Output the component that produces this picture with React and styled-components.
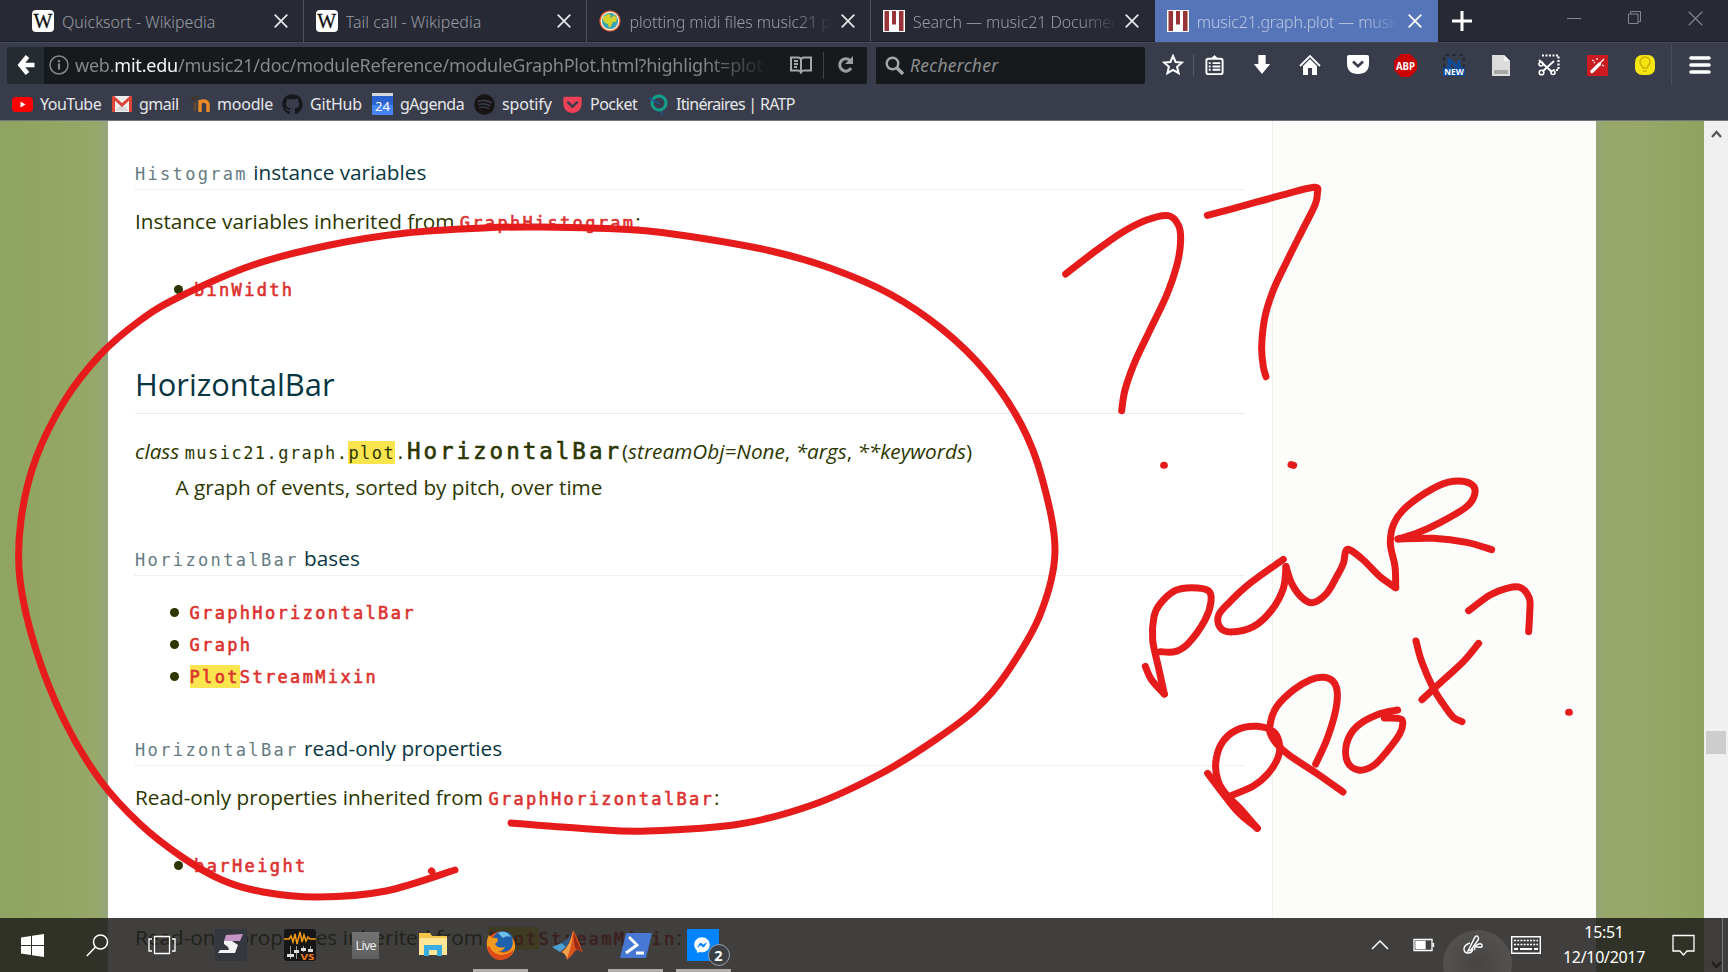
import React from "react";
import styled, { createGlobalStyle, css } from "styled-components";
import { FaGithub, FaSpotify, FaGetPocket, FaFacebookMessenger } from "react-icons/fa";

const Global = createGlobalStyle`
  * { box-sizing: border-box; }
  body { margin: 0; background: #fff; overflow: hidden; }
  svg { display: block; flex: none; }
`;

const ui = `"Noto Sans", "Open Sans", sans-serif`;
const bodyFont = `"Open Sans", "Noto Sans", sans-serif`;
const mono = `"DejaVu Sans Mono", "Liberation Mono", monospace`;

const Screen = styled.div`
  position: relative;
  width: 1728px;
  height: 972px;
  overflow: hidden;
  display: flex;
  flex-direction: column;
`;

/* ---------- browser chrome ---------- */
const TabStrip = styled.div`
  display: flex;
  height: 42px;
  padding-left: 20px;
  background: #272a35;
  border-bottom: 1px solid #1d2029;
`;
const Tab = styled.div`
  display: flex;
  align-items: center;
  width: 283.7px;
  height: 42px;
  padding: 0 15px 0 12px;
  border-right: 1px solid ${(p) => (p.$active ? "#5675b9" : p.$last ? "transparent" : "#4d505b")};
  background: ${(p) => (p.$active ? "#5675b9" : "transparent")};
`;
const TabTitle = styled.div`
  flex: 1;
  margin: 2px 8px 0 8px;
  overflow: hidden;
  white-space: nowrap;
  font: 300 16px ${ui};
  letter-spacing: ${(p) => p.$ls || 0}px;
  color: ${(p) => (p.$active ? "#bcc7e1" : "#9a9ca4")};
  ${(p) => p.$fade && css`mask-image: linear-gradient(90deg, #000 82%, transparent 100%);`}
`;
const WinControls = styled.div`
  display: flex;
  align-items: center;
  gap: 45px;
  margin-left: 92px;
  height: 36px;
`;
const NewTab = styled.div`
  display: flex;
  align-items: center;
  height: 41px;
  margin-left: 14px;
`;
const NavBar = styled.div`
  display: flex;
  align-items: center;
  height: 46px;
  padding: 0 0 1px 7px;
  background: #393d4b;
  border-top: 1px solid #454957;
`;
const Back = styled.div`
  display: flex;
  align-items: center;
  justify-content: center;
  width: 37px;
  height: 37px;
  background: #242b31;
  border-radius: 2px 0 0 2px;
`;
const Field = styled.div`
  display: flex;
  align-items: center;
  width: ${(p) => p.$w}px;
  height: 37px;
  padding-left: ${(p) => p.$pl}px;
  margin-right: 9px;
  background: #171a1d;
  border-radius: 0 2px 2px 0;
`;
const Url = styled.div`
  width: 689px;
  margin: 0 26px 0 6px;
  overflow: hidden;
  white-space: nowrap;
  font: 18px ${ui};
  letter-spacing: ${(p) => p.$ls}px;
  color: #85878a;
  mask-image: linear-gradient(90deg, #000 91%, transparent 101%);
  b { font-weight: 400; color: #f4f4f4; }
`;
const Hint = styled.div`
  margin-left: 6px;
  font: italic 17.5px ${ui};
  letter-spacing: 0.25px;
  color: #8b8d8f;
`;
const VLine = styled.div`
  width: 1px;
  height: ${(p) => p.$h}px;
  margin: 0 ${(p) => p.$r}px 0 ${(p) => p.$l}px;
  background: ${(p) => p.$c || "#565a66"};
`;
const Tools = styled.div`
  display: flex;
  align-items: center;
`;
const Tool = styled.div`
  display: flex;
  justify-content: center;
  width: ${(p) => p.$w || 47.8}px;
  margin-right: ${(p) => p.$mr || 0}px;
`;
const Bookmarks = styled.div`
  display: flex;
  align-items: center;
  height: 33px;
  padding-left: 12px;
  background: #393d4b;
  border-bottom: 1px solid #71727c;
`;
const Bookmark = styled.div`
  display: flex;
  align-items: center;
  gap: 7px;
  width: ${(p) => p.$w}px;
  height: 32px;
  white-space: nowrap;
  font: 16px ${ui};
  letter-spacing: ${(p) => p.$ls || 0}px;
  color: #e6e7ea;
`;

/* ---------- page ---------- */
const Viewport = styled.div`
  display: flex;
  height: 851px;
  overflow: hidden;
`;
const Grass = styled.div`
  width: 108px;
  background: ${(p) =>
    p.$right
      ? "linear-gradient(90deg, #93a57b 0, #97a868 9px, #96a767 50%, #8fa35f 100%)"
      : "linear-gradient(90deg, #8fa462 0, #92a562 40%, #97a868 88%, #93a57b 100%)"};
`;
const Main = styled.main`
  width: 1164px;
  padding: 0 27px;
  background: #fff;
  font: 20.75px/32px ${bodyFont};
  color: #2c3600;
  white-space: nowrap;
`;
const Side = styled.aside`
  width: 324px;
  background: #fcfdfa;
  border-left: 1px dotted #e6e8d6;
`;
const ScrollBar = styled.div`
  display: flex;
  flex-direction: column;
  align-items: center;
  width: 24px;
  padding-top: 9px;
  background: #f0f0f0;
`;
const Thumb = styled.div`
  width: 20px;
  height: 23px;
  margin: 593px 0 207px 0;
  background: #cdcdcd;
`;
const H2 = styled.h2`
  margin: 58px 0 0;
  padding-bottom: 7px;
  border-bottom: 1px solid #e8ebea;
  font: 30.9px/44px ${bodyFont};
  color: #073642;
`;
const H3 = styled.h3`
  margin: ${(p) => p.$mt}px 0 0;
  padding-bottom: 1px;
  border-bottom: 1px dotted #dfe3e1;
  font: 20.75px/32px ${bodyFont};
  color: #073642;
`;
const P = styled.p`
  margin: ${(p) => p.$mt}px 0 0;
  padding-left: ${(p) => p.$pl || 0}px;
  height: 32px;
`;
const Code = styled.code`
  font: 400 ${(p) => p.$size || 17}px/0 ${mono};
  letter-spacing: ${(p) => p.$ls ?? 2.3}px;
  color: ${(p) => p.$c || "inherit"};
  ${(p) => p.$bold && css`-webkit-text-stroke: 0.6px currentColor;`}
`;
const Link = styled(Code).attrs({ $bold: true, $c: "#dc322f" })``;
const Mark = styled.mark`
  padding: 2px 0 1px;
  background: #fbe54e;
  color: inherit;
`;
const List = styled.ul`
  margin: ${(p) => p.$mt}px 0 0;
  padding: 0 0 0 ${(p) => p.$pl}px;
  list-style: none;
`;
const Item = styled.li`
  height: 32px;
  &::before {
    content: "";
    display: inline-block;
    width: 9px;
    height: 9px;
    margin-right: 11px;
    vertical-align: 2.5px;
    border-radius: 50%;
    background: #2c3600;
  }
`;

/* ---------- task bar ---------- */
const TaskBar = styled.div`
  position: absolute;
  left: 0;
  right: 0;
  bottom: 0;
  z-index: 3;
  display: flex;
  height: 54px;
  background: rgba(30, 29, 28, 0.85);
  overflow: hidden;
`;
const Task = styled.div`
  position: relative;
  display: flex;
  align-items: center;
  justify-content: center;
  width: ${(p) => p.$w || 67.5}px;
  height: 54px;
  ${(p) =>
    p.$open &&
    css`
      &::after {
        content: "";
        position: absolute;
        bottom: 0;
        left: 6px;
        width: 55px;
        height: 3px;
        background: #b2acaa;
      }
    `}
`;
const LiveTile = styled.div`
  width: 27px;
  height: 27px;
  background: linear-gradient(#747474, #5e5e5e);
  color: #f2f2f2;
  font: 12.5px/28px "Open Sans", sans-serif;
  letter-spacing: -0.6px;
  text-align: center;
`;
const Badge = styled.div`
  position: absolute;
  left: 38px;
  top: 26px;
  width: 22px;
  height: 22px;
  border: 1px solid #9aa1a8;
  border-radius: 50%;
  background: #3a4046;
  color: #fff;
  font: 700 14.5px/20px ${ui};
  text-align: center;
`;
const Tray = styled.div`
  display: flex;
  align-items: center;
  margin-left: auto;
`;
const PenHalo = styled.div`
  display: flex;
  justify-content: center;
  width: 69px;
  height: 69px;
  margin-top: 39px;
  padding-top: 5px;
  border-radius: 50%;
  background: radial-gradient(circle, #464543 0, #555452 85%);
  svg { margin-left: -10px; }
`;
const Clock = styled.div`
  width: 100px;
  text-align: center;
  font: 16px/25px ${ui};
  letter-spacing: -0.3px;
  color: #fff;
`;

/* ---------- ink ---------- */
const InkLayer = styled.svg`
  position: absolute;
  inset: 0;
  z-index: 2;
  fill: none;
  stroke: #e61c1c;
  stroke-width: 7;
  stroke-linecap: round;
  stroke-linejoin: round;
`;

/* Smooth curve (Catmull-Rom) through a flat list of x,y values. */
function curve(flat, [ox, oy, k]) {
  const pts = [];
  for (let i = 0; i < flat.length; i += 2) pts.push([ox + flat[i] / k, oy + flat[i + 1] / k]);
  let d = `M${pts[0]}`;
  for (let i = 0; i < pts.length - 1; i++) {
    const a = pts[i - 1] || pts[i], b = pts[i], c = pts[i + 1], e = pts[i + 2] || c;
    d += `C${b[0] + (c[0] - a[0]) / 6},${b[1] + (c[1] - a[1]) / 6} ${c[0] - (e[0] - b[0]) / 6},${c[1] - (e[1] - b[1]) / 6} ${c}`;
  }
  return d;
}

const ink = [
  { at: [0, 0, 1], strokes: [
    [511,823, 590,829, 647,831, 740,824, 815,804, 882,773, 935,740, 976,709, 1006,674, 1040,615, 1055,551, 1042,478, 1021,424, 986,372, 942,329, 890,294, 830,268, 771,251, 700,238, 636,230, 540,227, 483,228, 406,233, 330,245, 253,265, 177,298, 138,322, 100,355, 65,400, 36,458, 21,520, 20,580, 36,650, 64,720, 100,780, 140,824, 182,857, 222,880, 263,892, 318,897, 386,891, 455,870],
    [431.5,871, 432,871.5],
  ] },
  { at: [1040, 160, 3], strokes: [
    [77,342, 160,278, 245,218, 320,180, 385,167, 415,195, 422,240, 412,310, 380,405, 330,510, 285,605, 255,690, 245,752],
    [502,166, 600,140, 720,107, 822,82, 832,100, 825,135, 790,205, 740,305, 700,390, 675,470, 665,560, 670,620, 678,650],
    [371,916, 373,916],
    [753,914, 761,916],
  ] },
  { at: [1120, 460, 3], strokes: [
    [76,619, 95,660, 133,702],
    [133,702, 115,620, 98,540, 102,470, 120,432, 165,392, 215,383, 265,392, 273,425, 255,480, 205,550, 165,575, 121,575],
    [490,298, 390,370, 330,425, 296,465, 300,502, 332,516, 400,500, 455,450, 490,385, 498,320],
    [498,320, 515,370, 545,412, 578,428, 620,400, 650,350, 670,310, 677,274, 690,270, 730,300, 780,350, 827,383],
    [827,383, 825,320, 811,250, 822,190, 860,140, 940,85, 1000,64, 1050,70, 1065,98, 1040,140, 960,188, 890,220, 834,237],
    [834,237, 940,235, 1040,247, 1115,269],
    [1046,452, 1110,405, 1160,385, 1200,382, 1228,415, 1229,460, 1226,515],
    [1346,757, 1348,757],
    [888,543, 905,605, 940,685, 975,740, 1000,772, 1026,785],
    [1076,550, 1030,605, 970,660, 906,719],
    [263,940, 320,1015, 360,1062, 412,1105],
    [412,1105, 360,1045, 320,1005, 295,965, 287,910, 305,850, 350,810, 410,799, 460,815, 478,850, 475,890, 445,940, 400,978, 325,1010],
    [669,996, 590,940, 500,880, 455,830, 451,790, 470,740, 520,690, 570,660, 610,652, 640,665, 652,700, 645,760, 620,840, 587,912],
    [833,750, 770,765, 710,800, 680,850, 682,905, 715,930, 760,917, 800,875, 840,820, 848,785, 835,775, 793,774],
  ] },
];

/* ---------- icons ---------- */
const WikiTile = styled.div`
  display: flex;
  justify-content: center;
  width: 22px;
  height: 22px;
  border-radius: 4px;
  background: #fff;
  color: #111;
  font: 20px/22px "Liberation Serif", serif;
  -webkit-text-stroke: 0.3px #111;
`;
const Cross = ({ s = 14, c = "#e8e8ea", w = 1.7 }) => (
  <svg width={s} height={s} viewBox="0 0 14 14" stroke={c} strokeWidth={w}><path d="M.7.7l12.6 12.6M13.3.7L.7 13.3" /></svg>
);
const GlobeIcon = () => (
  <svg width="22" height="22" viewBox="0 0 22 22">
    <circle cx="11" cy="11" r="10.6" fill="#e2592f" /><circle cx="11" cy="11" r="9.4" fill="#fbe9cf" />
    <circle cx="11" cy="11" r="8" fill="#36a3b5" />
    <path d="M4 7l5-3 3 1-1 3 2-1 2-2 3 3-1 4-3 0-2 4-2 2-1-4-3-1-2-3z" fill="#d5d32b" />
  </svg>
);
const PianoIcon = () => (
  <svg width="22" height="22" viewBox="0 0 22 22">
    <path fill="#fff" d="M0 0h22v22H0z" />
    <path fill="#983338" d="M1.500 1h4.500v20H1.500zM9 1h4v13.500H9zM16 1h4.500v20H16z" />
  </svg>
);
const ToolIcon = ({ size = 22, children }) => (
  <svg width={size} height={size} viewBox="0 0 22 22" fill="none" stroke="#fff" strokeWidth="2">{children}</svg>
);
const GmailIcon = () => (
  <svg width="20" height="16" viewBox="0 0 20 16">
    <path fill="#eee" d="M0 0h20v16H0z" /><path fill="#d8d8d8" d="M3 15l7-7 7 7z" />
    <path fill="none" stroke="#dd4438" strokeWidth="3" d="M1.500 16V1.500L10 9l8.500-7.500V16" />
  </svg>
);
const CalendarIcon = styled.div`
  width: 21px;
  height: 22px;
  border-top: 3px solid #d4d7dc;
  background: linear-gradient(#2a62cf 50%, #4585f3 50%);
  color: #fff;
  font: 13px/20px ${ui};
  letter-spacing: 0;
  text-align: center;
`;

export default function App() {
  return (
    <>
      <Global />
      <Screen>
        <TabStrip>
          <Tab><WikiTile>W</WikiTile><TabTitle>Quicksort - Wikipedia</TabTitle><Cross /></Tab>
          <Tab><WikiTile>W</WikiTile><TabTitle $ls={0.05}>Tail call - Wikipedia</TabTitle><Cross /></Tab>
          <Tab><GlobeIcon /><TabTitle $fade $ls={-0.08}>plotting midi files music21 python</TabTitle><Cross /></Tab>
          <Tab $last><PianoIcon /><TabTitle $fade $ls={-0.08}>Search — music21 Documentation</TabTitle><Cross /></Tab>
          <Tab $active><PianoIcon /><TabTitle $active $fade $ls={-0.15}>music21.graph.plot — music21</TabTitle><Cross c="#fff" /></Tab>
          <NewTab><svg width="20" height="20" stroke="#fff" strokeWidth="3"><path d="M10 0v20M0 10h20" /></svg></NewTab>
          <WinControls>
            <svg width="18" height="16" stroke="#85878f"><path d="M3 8.500h14" /></svg>
            <svg width="16" height="16" fill="none" stroke="#85878f"><path d="M3.500 3.500V1.500h10v10h-2M1.500 4h9.500v9.500H1.500z" /></svg>
            <Cross s={15} c="#85878f" w={1} />
          </WinControls>
        </TabStrip>

        <NavBar>
          <Back><svg width="18" height="20" viewBox="0 0 18 20" fill="none" stroke="#fff" strokeWidth="4.600"><path d="M10.500 1.500L3.500 10l7 8.500M4 10h13.500" /></svg></Back>
          <Field $w={823} $pl={5}>
            <svg width="20" height="20" fill="none" stroke="#85878a" strokeWidth="1.500"><circle cx="10" cy="10" r="9" /><path strokeWidth="2.200" d="M10 8.500v6M10 5v2.200" /></svg>
            <Url $ls={-0.22}>web.<b>mit.edu</b>/music21/doc/moduleReference/moduleGraphPlot.html?highlight=plot</Url>
            <svg width="22" height="18" fill="none" stroke="#a5a6a7" strokeWidth="2"><path d="M1 1.500h7q3 0 3 2.500 0-2.500 3-2.500h7v13h-7q-2 0-3 2-1-2-3-2H1zM11 4v11M4 5h4M4 8h4M4 11h3" /></svg>
            <VLine $h={27} $l={11} $r={13} $c="#3f4347" />
            <svg width="17" height="18" fill="none" stroke="#9c9d9e" strokeWidth="3"><path d="M13 4.500A6 6.200 0 1 0 14 12" /><path fill="#9c9d9e" stroke="none" d="M16 0v8H8z" /></svg>
          </Field>
          <Field $w={269} $pl={9}>
            <svg width="19" height="19" fill="none" stroke="#a5a6a7"><circle cx="7.500" cy="7.500" r="5.800" strokeWidth="2.400" /><path strokeWidth="3.400" d="M12 12l6 6" /></svg>
            <Hint>Rechercher</Hint>
          </Field>
          <Tools>
            <Tool $w={38}><ToolIcon><path d="M11 2l2.600 6 6.300.6-4.800 4.200 1.500 6.400-5.600-3.400-5.600 3.400 1.500-6.400L2.100 8.600 8.400 8z" /></ToolIcon></Tool>
            <VLine $h={22} $l={1} $r={0} />
            <Tool $w={40} $mr={4.6}><ToolIcon size={21}><rect x="2.500" y="4" width="17" height="16" rx="2" /><path fill="#fff" stroke="none" d="M7 4l4-4 4 4z" /><path d="M5 8.500h2M9 8.500h8M5 12h2M9 12h8M5 15.500h2M9 15.500h8" /></ToolIcon></Tool>
            <Tool><ToolIcon size={20}><path fill="#fff" stroke="none" d="M7 0h8v10h5l-9 11-9-11h5z" /></ToolIcon></Tool>
            <Tool><ToolIcon><path strokeWidth="1.800" d="M1 12L11 2l10 10" /><path fill="#fff" stroke="none" d="M4 12l7-7 7 7v9h-5v-7H9v7H4z" /></ToolIcon></Tool>
            <Tool><ToolIcon><path fill="#fff" stroke="none" d="M2 1h18q2 0 2 2v6q0 11-11 11T0 9V3q0-2 2-2z" /><path stroke="#393d4b" strokeWidth="2.600" d="M6 7.500l5 4.800 5-4.800" /></ToolIcon></Tool>
            <Tool>
              <svg width="23" height="23" viewBox="0 0 23 23"><path fill="#cb0000" d="M7 0h9l7 7v9l-7 7H7l-7-7V7z" /><text x="11.500" y="15.500" textAnchor="middle" fill="#fff" fontFamily="Open Sans, sans-serif" fontWeight="700" fontSize="10.500" textLength="19" lengthAdjust="spacingAndGlyphs">ABP</text></svg>
            </Tool>
            <Tool>
              <svg width="22" height="22" viewBox="0 0 22 22"><path fill="none" stroke="#22252e" strokeWidth="1.500" strokeDasharray="4 3" d="M1 14V1h20v13" /><path fill="none" stroke="#0d4b9b" strokeWidth="3" d="M6 14V6l10 8V6" /><path fill="#0d4b9b" d="M0 13.500h22V22H0z" /><text x="11" y="21" textAnchor="middle" fill="#fff" fontFamily="Open Sans, sans-serif" fontWeight="700" fontSize="8.500" textLength="19.500" lengthAdjust="spacingAndGlyphs">NEW</text></svg>
            </Tool>
            <Tool>
              <svg width="18" height="21" viewBox="0 0 18 21"><path fill="#dcdcdc" d="M0 0h12l6 6v15H0z" /><path fill="#f8f8f8" d="M12 0v6h6z" /><path fill="#a6a8a8" d="M2 15h14v4H2z" /></svg>
            </Tool>
            <Tool>
              <ToolIcon><path strokeWidth="2.200" strokeDasharray="2 1.500" d="M4 1.500h16.500v14.500H15" /><path strokeWidth="1.800" d="M1 6l13 12M16 7L5 17" /><circle cx="3.500" cy="18.500" r="2.300" strokeWidth="1.600" /><circle cx="15" cy="18.500" r="2" strokeWidth="1.600" /><circle cx="3" cy="10" r="2" strokeWidth="1.600" /></ToolIcon>
            </Tool>
            <Tool>
              <svg width="21" height="21" viewBox="0 0 21 21"><path fill="#cb1a20" d="M0 0h21v21H0z" /><path stroke="#fff" strokeWidth="3.200" strokeLinecap="round" d="M5 16.500l7.500-7.500" /><path stroke="#fff" strokeWidth="1.200" d="M13 8l4-4M5 5l2 1M10 3v2M15 10l2 1M7 8l1-1" /></svg>
            </Tool>
            <Tool>
              <svg width="20" height="20" viewBox="0 0 20 20"><rect width="20" height="20" rx="7" fill="#f3e612" /><path fill="none" stroke="#d3b100" strokeWidth="1.600" d="M8 13c0-2-3-3-3-6a5 5 0 0 1 10 0c0 3-3 4-3 6zM8 16h4" /></svg>
            </Tool>
            <VLine $h={40} $l={2} $r={17} $c="#4a4e5b" />
            <svg width="22" height="20" stroke="#fff" strokeWidth="3.600" strokeLinecap="round"><path d="M2 3h18M2 10h18M2 17h18" /></svg>
          </Tools>
        </NavBar>

        <Bookmarks>
          <Bookmark $w={100} $ls={-0.5}><svg width="21" height="15" viewBox="0 0 21 15"><rect width="21" height="15" rx="4" fill="#f00" /><path fill="#fff" d="M8.500 4.500l5 3-5 3z" /></svg>YouTube</Bookmark>
          <Bookmark $w={78} $ls={-0.5}><GmailIcon />gmail</Bookmark>
          <Bookmark $w={92} $ls={-0.2}>
            <svg width="20" height="16" viewBox="1 0 20 16"><path fill="#41352f" d="M0 2l8-2 3 2-8 3z" /><path fill="none" stroke="#6b4a2c" strokeWidth="2.500" d="M6 15V6" /><path fill="none" stroke="#ee8a26" strokeWidth="3.400" d="M11 4v12M11 8q0-3 3.500-3T19 8v8" /></svg>moodle
          </Bookmark>
          <Bookmark $w={90} $ls={-0.2}><FaGithub size={21} color="#15171b" />GitHub</Bookmark>
          <Bookmark $w={102} $ls={-0.5}><CalendarIcon>24</CalendarIcon>gAgenda</Bookmark>
          <Bookmark $w={88} $ls={-0.15}><FaSpotify size={21} color="#191414" />spotify</Bookmark>
          <Bookmark $w={87} $ls={-0.5}><FaGetPocket size={21} color="#ee4056" />Pocket</Bookmark>
          <Bookmark $w={160} $ls={-0.7}>
            <svg width="20" height="22" viewBox="0 0 20 22" fill="none"><path stroke="#21578c" strokeWidth="2" d="M0 5l6 2M12 16l1 6" /><circle cx="10" cy="10" r="7" stroke="#13a08b" strokeWidth="3" /><path stroke="#21578c" strokeWidth="2" d="M2 6l9 5" /></svg>Itinéraires | RATP
          </Bookmark>
        </Bookmarks>

        <Viewport>
          <Grass />
          <Main>
            <H3 $mt={35}><Code $c="#657b83">Histogram</Code> instance variables</H3>
            <P $mt={15}>Instance variables inherited from <Link>GraphHistogram</Link>:</P>
            <List $mt={35} $pl={39}><Item><Link>binWidth</Link></Item></List>
            <H2>HorizontalBar</H2>
            <P $mt={21}>
              <i>class </i><Code $ls={1.46}>music21.graph.<Mark>plot</Mark>.</Code><Code $bold $size={22.5} $ls={3}>HorizontalBar</Code>(<i>streamObj=None</i>, <i>*args</i>, <i>**keywords</i>)
            </P>
            <P $mt={4} $pl={40.5}>A graph of events, sorted by pitch, over time</P>
            <H3 $mt={39}><Code $c="#657b83" $ls={2.36}>HorizontalBar</Code> bases</H3>
            <List $mt={19} $pl={34.5}>
              <Item><Link $ls={2.34}>GraphHorizontalBar</Link></Item>
              <Item><Link $ls={2.34}>Graph</Link></Item>
              <Item><Link $ls={2.34}><Mark>Plot</Mark>StreamMixin</Link></Item>
            </List>
            <H3 $mt={41}><Code $c="#657b83" $ls={2.36}>HorizontalBar</Code> read-only properties</H3>
            <P $mt={15}>Read-only properties inherited from <Link>GraphHorizontalBar</Link>:</P>
            <List $mt={35} $pl={39}><Item><Link $ls={2.4}>barHeight</Link></Item></List>
            <P $mt={41}>Read-only properties inherited from <Link><Mark>Plot</Mark>StreamMixin</Link>:</P>
          </Main>
          <Side />
          <Grass $right />
          <ScrollBar>
            <svg width="11" height="8" fill="none" stroke="#555" strokeWidth="2.200"><path d="M1 7l4.500-5L10 7" /></svg>
            <Thumb />
            <svg width="11" height="8" fill="none" stroke="#222" strokeWidth="2.200"><path d="M1 1l4.500 5L10 1" /></svg>
          </ScrollBar>
        </Viewport>

        <InkLayer width="1728" height="972">
          {ink.map((g) => g.strokes.map((s, i) => <path key={g.at + "-" + i} d={curve(s, g.at)} />))}
        </InkLayer>

        <TaskBar>
          <Task $w={64}><svg width="23" height="23" viewBox="0 0 23 23" fill="#fff"><path d="M0 3.500l10-1.500v9H0zM11 1.800L23 0v11H11zM0 12h10v9L0 19.500zM11 12h12v11l-12-1.800z" /></svg></Task>
          <Task $w={66}><svg width="23" height="23" fill="none" stroke="#fff" strokeWidth="1.500"><circle cx="14.500" cy="8" r="7" /><path d="M9.500 13L.8 22" /></svg></Task>
          <Task $w={64}><svg width="28" height="20" fill="none" stroke="#fff" strokeWidth="1.300"><path d="M6.500 1.500h15v17h-15zM4 4H1v12h3M24 4h3v12h-3" /></svg></Task>
          <Task $w={73}>
            <svg width="32" height="32" viewBox="0 0 32 32"><path fill="#34373d" d="M0 0h32v32H0z" /><path fill="#c594c2" d="M11 6l17-1-3 7H9z" /><path fill="#f4f4f4" d="M9 12h8l6 4-3 8H3l2-3h9l-1-3-4-3z" /></svg>
          </Task>
          <Task $w={65}>
            <svg width="32" height="32" viewBox="0 0 32 32"><rect width="32" height="32" rx="3" fill="#161616" /><path fill="none" stroke="#f49a16" strokeWidth="1.500" d="M0 10h5l2-3 2 6 2-8 2 10 3-12 2 10 2-7 2 6 2-4 2 2h6" /><path stroke="#999" d="M6.500 17v13M12.500 17v13M19.500 17v6M26.500 17v6" /><path fill="#ddd" d="M3 25h7v3H3zM10 21h5v3h-5zM17 19h5v3h-5zM24 20h5v3h-5z" /><text x="16.500" y="30.500" fill="#f47c16" fontFamily="Open Sans, sans-serif" fontWeight="700" fontSize="8.500" textLength="14" lengthAdjust="spacingAndGlyphs">VS</text></svg>
          </Task>
          <Task><LiveTile>Live</LiveTile></Task>
          <Task>
            <svg width="30" height="26" viewBox="0 0 30 26"><path fill="#f6c64b" d="M1 1h11l2 3h15v6H1z" /><path fill="#ffe694" d="M1 6h28v17H1z" /><path fill="#39ace2" d="M6 13h18v11h-5v-6h-8v6H6z" /></svg>
          </Task>
          <Task $open>
            <svg width="30" height="30" viewBox="0 0 30 30"><circle cx="15" cy="15.500" r="14" fill="#e3591d" /><circle cx="17" cy="11.500" r="10.500" fill="#1e62ae" /><path fill="#6fc1ea" d="M12 3q8-4 13 4-5-2-8 1z" /><path fill="#f29a1f" d="M3 5l3 3 5 0 1 3-3 3q3 5 10 3-2 5-8 4 9 5 14-2 3-5 1-11 5 6 2 13-4 8-13 8T2 20Q-1 12 3 5z" /><path fill="#dc4b1a" d="M3 16q4 8 12 9 8 0 13-6-3 10-13 11T1 17z" /></svg>
          </Task>
          <Task>
            <svg width="32" height="30" viewBox="0 0 32 30"><path fill="#4d9fd1" d="M0 17l10-4 4 4-6 5z" /><path fill="#2d5d8a" d="M10 13l6-5 4-6-5 16z" /><path fill="#d9541e" d="M21 0q4 6 10 23-5-5-8-2-4 6-8 9-1-7-6-8 8-4 12-22z" /><path fill="#f5a04c" d="M21 1q-1 14-6 28-1-5-5-7 8-5 11-21z" /><path fill="#9a2a14" d="M22 3q3 8 8 19-4-4-6-2-3-7-2-17z" /></svg>
          </Task>
          <Task $open>
            <svg width="32" height="25" viewBox="0 0 32 25"><path fill="#4778d4" d="M6 0h26l-6 25H0z" /><path fill="none" stroke="#fff" strokeWidth="2.800" d="M9 4l8 8L6 20M16 20h8" /></svg>
          </Task>
          <Task $open>
            <svg width="32" height="32" viewBox="0 0 32 32"><path fill="#0084ff" d="M0 0h32v32H0z" /><FaFacebookMessenger x="7" y="8" size={16} color="#fff" /></svg>
            <Badge>2</Badge>
          </Task>
          <Tray>
            <svg width="18" height="12" fill="none" stroke="#fff" strokeWidth="1.500"><path d="M1 10l8-8 8 8" /></svg>
            <VLine $h={1} $l={12} $r={11} $c="transparent" />
            <svg width="22" height="14" fill="none" stroke="#fff" strokeWidth="1.300"><path d="M1 1.500h18v11H1zM20.500 5v4" /><path fill="#fff" d="M3 3.500h9v7H3z" /></svg>
            <VLine $h={1} $l={4} $r={3} $c="transparent" />
            <PenHalo><svg width="20" height="19" fill="none" stroke="#fff" strokeWidth="1.400"><path d="M6 14L12 2q2-2 3 0t0 3L8 15l-3 1zM7 8q-6 2-6 6t4 4 5-4M12 11q6-4 7-1t-4 2-3 3" /></svg></PenHalo>
            <VLine $h={1} $l={-2} $r={0} $c="transparent" />
            <svg width="30" height="18" fill="none" stroke="#fff" strokeWidth="1.400"><path d="M.7.7h28.600v16.600H.7z" /><path strokeDasharray="2 1.200" d="M3 4.500h24M3 8.500h24" /><path strokeWidth="2" d="M3 13h4M9 13h12M23 13h4" /></svg>
            <VLine $h={1} $l={6} $r={6} $c="transparent" />
            <Clock>15:51<br />12/10/2017</Clock>
            <VLine $h={1} $l={9} $r={8} $c="transparent" />
            <svg width="23" height="23" fill="none" stroke="#fff" strokeWidth="1.300"><path d="M1 1.500h21v15.500h-7l-3.500 4-3.500-4H1z" /></svg>
            <VLine $h={54} $l={27} $r={5} $c="#777" />
          </Tray>
        </TaskBar>
      </Screen>
    </>
  );
}
